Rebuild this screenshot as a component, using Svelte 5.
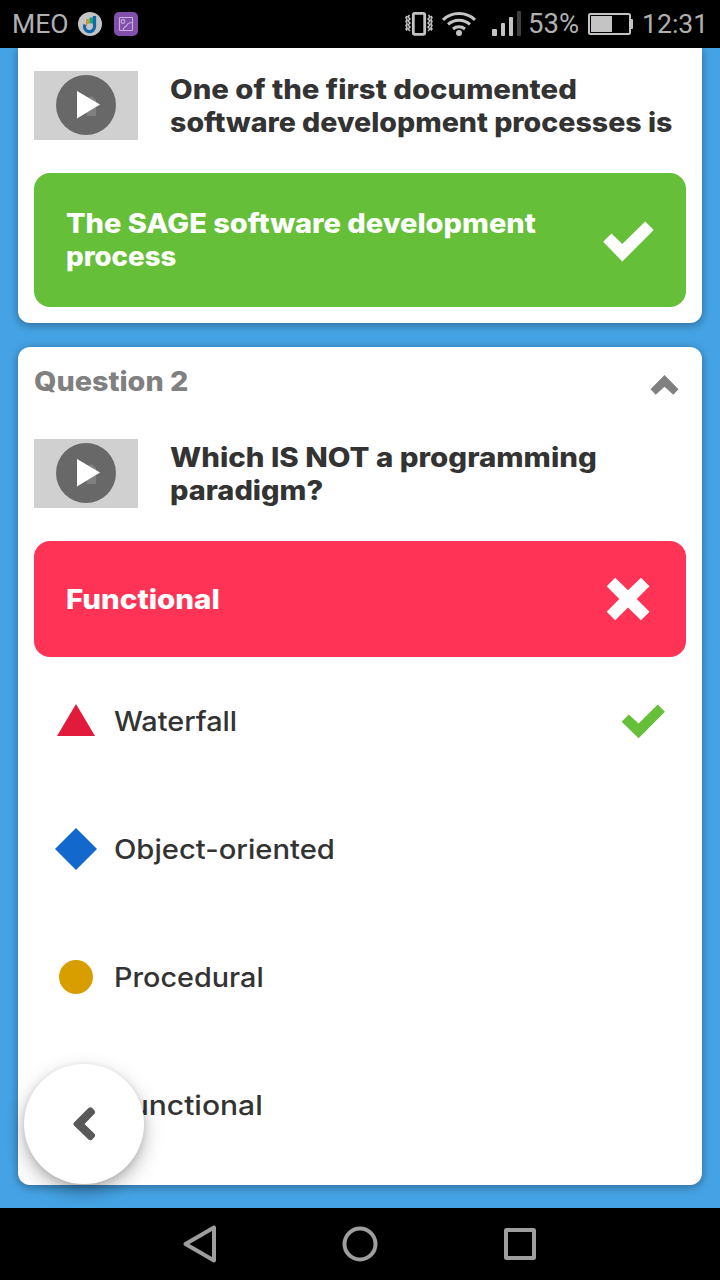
<script>
  const first = {
    prompt: [
      { text: 'One of the first documented', stretch: 1.086 },
      { text: 'software development processes is', stretch: 1.058 }
    ],
    answer: [
      { text: 'The SAGE software development', stretch: 1.074 },
      { text: 'process', stretch: 1.024 }
    ]
  };
  const second = {
    title: [{ text: 'Question 2', stretch: 1.065 }],
    prompt: [
      { text: 'Which IS NOT a programming', stretch: 1.091 },
      { text: 'paradigm?', stretch: 1.072 }
    ],
    answer: [{ text: 'Functional', stretch: 1.094 }]
  };
  const options = [
    { text: 'Waterfall', stretch: 1.067, shape: 'triangle', correct: true },
    { text: 'Object-oriented', stretch: 1.081, shape: 'diamond' },
    { text: 'Procedural', stretch: 1.066, shape: 'circle' },
    { text: 'Functional', stretch: 1.112, shape: 'square' }
  ];
</script>

{#snippet lines(items)}
  {#each items as l}
    <span class="line" style="transform:scaleX({l.stretch})">{l.text}</span>
  {/each}
{/snippet}

{#snippet question(items)}
  <div class="question">
    <svg class="thumb" width="104" height="69" viewBox="0 0 104 69">
      <rect width="104" height="69" fill="#d0d0d0" />
      <circle cx="52" cy="34" r="30" fill="#686868" />
      <path d="M53 28l4.500-3 4.500 4v4h0v12h-9z" fill="#808080" />
      <path d="M43 20v27.500l23-14z" fill="#fff" />
    </svg>
    <h2>{@render lines(items)}</h2>
  </div>
{/snippet}

<div class="screen">
  <header class="status">
    <span class="carrier">MEO</span>
    <svg class="app" width="24" height="24" viewBox="0 0 24 24">
      <circle cx="12" cy="12" r="12" fill="#c4c4c4" />
      <path d="M8 7h3.500v7H8z" fill="#c39a2b" />
      <path d="M11.500 5.500h4v6h-4z" fill="#18a389" />
      <path d="M16.500 4v10.500a5 5 0 1 1-9.500-2" fill="none" stroke="#1667a8" stroke-width="3.300" />
      <circle cx="11.500" cy="14.500" r="3" fill="#c4c4c4" />
    </svg>
    <svg class="gallery" width="24" height="24" viewBox="0 0 24 24">
      <rect width="24" height="24" rx="5" fill="#834fac" />
      <g fill="none" stroke="#c7b1d8" stroke-width="1.100">
        <rect x="5.500" y="5.500" width="13" height="13" rx=".5" />
        <circle cx="9" cy="9.500" r="1.900" />
        <path d="M9 18.500c.5-3 2-4 3.500-4.500.5-2.500 3-3.500 6-3.500" />
      </g>
    </svg>
    <span class="grow"></span>
    <svg class="vibrate" width="28" height="26" viewBox="0 0 28 26">
      <g fill="none" stroke="#c4c4c4">
        <rect x="8.300" y="2.300" width="11.400" height="21" rx="1.500" stroke-width="2.800" />
        <path d="M4.500 4l-1.500 2 2 2-2 2 2 2-2 2 2 2-2 2 2 2M2 5l-1 1.500 1 2-1 2 1 2-1 2 1 2-1 1.500 1 1.500M23.500 4l1.500 2-2 2 2 2-2 2 2 2-2 2 2 2-2 2M26 5l1 1.500-1 2 1 2-1 2 1 2-1 2 1 1.500-1 1.500" stroke-width="1.500" />
      </g>
    </svg>
    <svg class="wifi" width="34" height="26" viewBox="0 0 34 26">
      <g fill="none" stroke="#c4c4c4" stroke-width="3">
        <path d="M1 8.800a23.500 23.500 0 0 1 32 0M6 13.400a16.500 16.500 0 0 1 22 0M11 18a9.500 9.500 0 0 1 12 0" />
      </g>
      <circle cx="17" cy="22" r="3" fill="#c4c4c4" />
    </svg>
    <svg class="signal" width="30" height="26" viewBox="0 0 30 26">
      <g fill="#c4c4c4">
        <rect x="0" y="18" width="5" height="7" rx="1" />
        <rect x="9" y="12" width="4" height="13" rx="1" />
        <rect x="17" y="6" width="4" height="19" rx="1" />
      </g>
      <rect x="25" y="0" width="4" height="25" rx="1" fill="#404040" />
    </svg>
    <span class="percent">53%</span>
    <svg class="battery" width="45" height="22" viewBox="0 0 45 22">
      <rect x="1" y="1" width="41" height="20" rx="1.500" fill="none" stroke="#c4c4c4" stroke-width="2" />
      <rect x="3" y="3" width="21" height="16" fill="#c4c4c4" />
      <rect x="42" y="6" width="3" height="10" rx="1" fill="#c4c4c4" />
    </svg>
    <span class="clock">12:31</span>
  </header>

  <main>
    <section class="card scrolled">
      {@render question(first.prompt)}
      <div class="answer right">
        <p>{@render lines(first.answer)}</p>
        <svg width="52" height="41" viewBox="0 0 52 41">
          <path d="M1.200 20.800l8.300-8.300 10.800 10.500L43.200.5l8.500 8.500L20.300 40.500z" fill="#fff" />
        </svg>
      </div>
    </section>

    <section class="card">
      <div class="head">
        <h3>{@render lines(second.title)}</h3>
        <svg width="28" height="20" viewBox="0 0 28 20">
          <path d="M14.500 0L28.500 14.200l-5.200 5.500-8.800-8-8.800 8L.5 14.200z" fill="#808080" />
        </svg>
      </div>
      {@render question(second.prompt)}
      <div class="answer wrong">
        <p>{@render lines(second.answer)}</p>
        <svg width="44" height="44" viewBox="0 0 44 44">
          <path d="M9.200.700L22 13.300 35 .7l8.500 8.500L30.700 22l12.800 12.800-8.500 8.500L22 30.500 9.200 43.300.7 34.800 13.300 22 .7 9.200z" fill="#fff" />
        </svg>
      </div>
      <ul>
        {#each options as o}
          <li>
            <svg class="shape" width="42" height="42" viewBox="0 0 42 42">
              {#if o.shape === 'triangle'}
                <path d="M21 4l19 32H2z" fill="#e21b3c" />
              {:else if o.shape === 'diamond'}
                <path d="M21 0l21 21-21 21L0 21z" fill="#1368ce" />
              {:else if o.shape === 'circle'}
                <circle cx="21" cy="21" r="17" fill="#d89e00" />
              {:else}
                <rect x="4" y="4" width="34" height="34" fill="#26890c" />
              {/if}
            </svg>
            <span class="label">{@render lines([o])}</span>
            {#if o.correct}
              <svg class="tick" width="45" height="35" viewBox="0 0 52 40.500">
                <path d="M.700 20.500l8.300-8.300 11.300 10.300L42.500.7l8.300 8.300L20.300 39.500z" fill="#66bf39" />
              </svg>
            {/if}
          </li>
        {/each}
      </ul>
    </section>

    <button class="back" aria-label="Back">
      <svg width="24" height="36" viewBox="0 0 24 36">
        <path d="M2 16.500L16.500 2q2-1.500 3.700 0l2.300 2.500q1.500 1.600 0 3.300L12.500 18l10 9.800q1.500 1.700 0 3.300l-2.300 2.300q-1.900 1.700-3.700 0L2 19.500q-1.500-1.500 0-3z" fill="#595959" />
      </svg>
    </button>
  </main>

  <nav>
    <svg width="36" height="40" viewBox="0 0 36 40"><path d="M32 3.500v33L3.500 20z" /></svg>
    <svg width="36" height="40" viewBox="0 0 36 40"><circle cx="18" cy="20" r="15.500" /></svg>
    <svg width="36" height="40" viewBox="0 0 36 40"><rect x="4" y="6" width="28" height="28" rx=".5" /></svg>
  </nav>
</div>

<style>
  :global(body) { overflow: hidden; }
  .screen {
    width: 720px; height: 1280px; display: flex; flex-direction: column;
    overflow: hidden; font-family: Inter, sans-serif; color: #333;
  }
  svg { display: block; flex: none; overflow: visible; }
  .status {
    height: 48px; flex: none; background: #000; color: #b0b0b0; display: flex; align-items: center;
    box-sizing: border-box; padding: 0 12px; font: 26.600px/52px Roboto, sans-serif; z-index: 2;
  }
  .carrier { width: 66px; }
  .gallery { margin-left: 12px; }
  .grow { flex: 1; }
  .wifi { margin-left: 9px; }
  .signal { margin-left: 16px; }
  .percent { margin-left: 6px; width: 54px; white-space: nowrap; font-size: 27.500px; }
  .battery { margin-left: 6px; }
  .clock { margin-left: 9px; width: 66px; white-space: nowrap; }
  main {
    flex: 1; min-height: 0; background: #45a3e5; padding: 0 18px; position: relative; overflow: hidden;
    display: flex; flex-direction: column; gap: 24px;
  }
  .card {
    background: #fff; border-radius: 12px; padding: 0 16px 16px;
    box-shadow: 0 2px 8px 1px rgba(0, 0, 0, .3); flex: none;
  }
  .scrolled { border-radius: 0 0 12px 12px; padding-top: 23px; }
  .head { height: 92px; display: flex; justify-content: space-between; box-sizing: border-box; padding: 18px 8px 0 0; }
  .head svg { margin-top: 10px; }
  h2, h3, p, ul { margin: 0; padding: 0; }
  h2, h3, p { font-size: 27px; font-weight: 800; line-height: 33px; }
  h3 { color: #808080; }
  .line { display: block; white-space: nowrap; transform-origin: 0 50%; width: max-content; }
  .question { display: flex; gap: 32px; height: 69px; margin-bottom: 33px; }
  h2 { padding-top: 2px; }
  .answer {
    border-radius: 16px; color: #fff; display: flex; align-items: center; justify-content: space-between;
    box-sizing: border-box; padding: 0 32px;
  }
  .right { height: 134px; background: #66bf39; }
  .wrong { height: 116px; background: #ff3355; padding-right: 36px; }
  .right svg { margin-top: 3px; }
  li { height: 128px; display: flex; align-items: center; padding: 0 20px 0 21px; }
  .label { margin-left: 17px; font-size: 27px; font-weight: 500; flex: 1; }
  .back {
    position: absolute; left: 24px; bottom: 24px; width: 120px; height: 120px; border: 0; border-radius: 50%;
    background: #fff; padding: 0; display: flex; align-items: center; justify-content: center;
    box-shadow: 0 8px 20px rgba(0, 0, 0, .28), 0 2px 6px rgba(0, 0, 0, .12);
  }
  nav { height: 72px; flex: none; background: #000; display: flex; justify-content: center; align-items: center; gap: 124px; z-index: 2; }
  nav svg { fill: none; stroke: #9e9e9e; stroke-width: 4; stroke-linejoin: round; }
</style>
